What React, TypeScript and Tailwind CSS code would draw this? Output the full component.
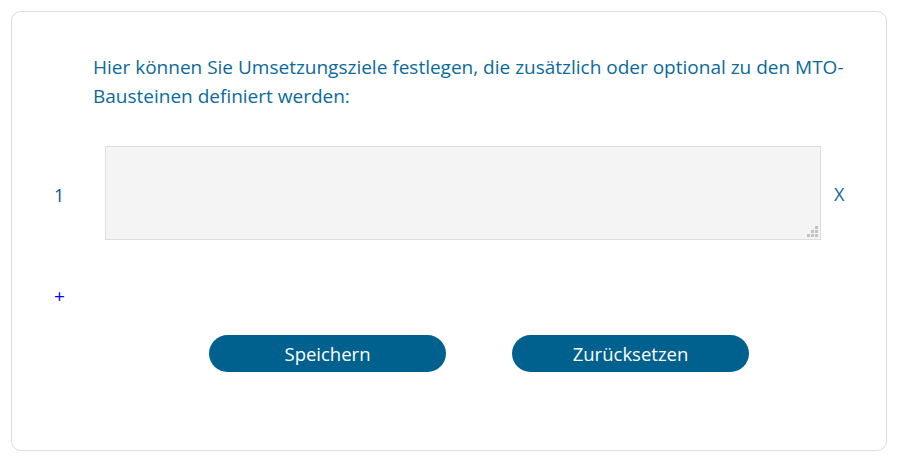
import React from "react";

export default function App() {
  const cells = [false, false, true, false, true, true, true, true, true];
  return (
    <div className="w-[900px] h-[460px] bg-white pt-[11px] pl-[11px]" style={{ fontFamily: '"Open Sans", "Noto Sans", sans-serif' }}>
      <div className="w-[876px] h-[440px] border border-[#dddddd] rounded-[10px] flex flex-col">
        <p className="mt-[41px] ml-[81px] w-[775px] text-[19px] leading-[29px] text-[#0a6a9b]">
          Hier können Sie Umsetzungsziele festlegen, die zusätzlich oder optional zu den MTO-Bausteinen definiert werden:
        </p>
        <div className="mt-[35px] flex items-center">
          <span className="ml-[42px] w-[51px] text-[18px] leading-none pt-[4px] text-[#0a5a8a]">1</span>
          <div className="relative w-[716px] h-[94px]">
            <textarea className="block w-full h-full bg-[#f4f4f4] border border-[#dddddd] outline-none resize-none" />
            <div className="absolute right-[3px] bottom-[3px] grid grid-cols-3 gap-[1px]">
              <span className="w-[3px] h-[3px]" />
              <span className="w-[3px] h-[3px]" />
              <span className="w-[3px] h-[3px] bg-[#c2c2c2]" />
              <span className="w-[3px] h-[3px]" />
              <span className="w-[3px] h-[3px] bg-[#c2c2c2]" />
              <span className="w-[3px] h-[3px] bg-[#c2c2c2]" />
              <span className="w-[3px] h-[3px] bg-[#c2c2c2]" />
              <span className="w-[3px] h-[3px] bg-[#c2c2c2]" />
              <span className="w-[3px] h-[3px] bg-[#c2c2c2]" />
            </div>
          </div>
          <span className="ml-[13px] text-[18px] leading-none pt-[2px] text-[#0a6a9b]">X</span>
        </div>
        <div className="mt-[46px] ml-[42px] h-[20px] flex items-center">
          <span className="text-[19px] leading-none text-[#0000ff]">+</span>
        </div>
        <div className="mt-[29px] ml-[197px] flex gap-[66px]">
          <button className="w-[237px] h-[37px] rounded-full bg-[#00618f] text-white text-[18.5px] flex items-center justify-center">
            Speichern
          </button>
          <button className="w-[237px] h-[37px] rounded-full bg-[#00618f] text-white text-[18.5px] flex items-center justify-center">
            Zurücksetzen
          </button>
        </div>
      </div>
    </div>
  );
}
